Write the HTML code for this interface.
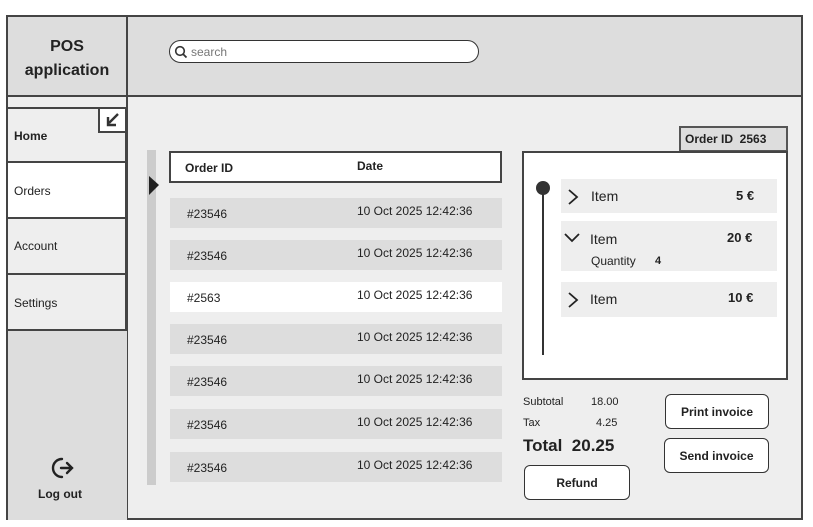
<!DOCTYPE html>
<html><head><meta charset="utf-8"><style>
*{margin:0;padding:0;box-sizing:border-box}
body{width:813px;height:527px;background:#fff;font-family:"Liberation Sans",sans-serif;color:#222;position:relative;overflow:hidden}
.a{position:absolute}
.b{font-weight:bold}
.row{position:absolute;left:170px;width:332px;height:30px;background:#ddd;font-size:12px}
.row span{position:absolute;top:9px}
.row .i{left:17px}
.row .d{left:187px;top:6px}
.nav{position:absolute;left:6px;width:121px;height:56px;border-bottom:2px solid #444;border-left:2px solid #444;border-right:2px solid #444;font-size:12px;padding-left:6px}
.it{position:absolute;left:561px;width:216px;background:#eee;font-size:14px}
.btn{position:absolute;background:#fff;border:1.5px solid #333;border-radius:6px;font-size:12px;font-weight:bold;text-align:center}
</style></head><body>
<div class="a" style="left:6px;top:15px;width:797px;height:505px;background:#eee;border:2px solid #444"></div>
<div class="a" style="left:6px;top:15px;width:797px;height:82px;background:#ddd;border:2px solid #444"></div>
<div class="a" style="left:126px;top:15px;width:2px;height:505px;background:#444"></div>
<div class="a b" style="left:8px;top:35px;width:118px;text-align:center;font-size:16px;line-height:24px">POS<br>application</div>
<div class="a" style="left:169px;top:40px;width:310px;height:23px;background:#fff;border:1.5px solid #333;border-radius:12px"></div>
<svg class="a" style="left:174px;top:45px" width="14" height="14"><circle cx="6" cy="6" r="4.3" fill="none" stroke="#333" stroke-width="1.6"/><path d="M9 9l3.5 3.5" stroke="#333" stroke-width="1.8"/></svg>
<div class="a" style="left:191px;top:45px;font-size:12px;color:#777">search</div>

<div class="a" style="left:6px;top:107px;width:121px;height:413px;background:#ddd;border-left:2px solid #444;border-top:2px solid #444"></div>
<div class="nav" style="top:107px;background:#eee;border-top:2px solid #444;font-weight:bold;padding-top:20px">Home</div>
<div class="nav" style="top:163px;background:#fff;padding-top:21px">Orders</div>
<div class="nav" style="top:219px;background:#eee;padding-top:20px">Account</div>
<div class="nav" style="top:275px;background:#eee;padding-top:21px">Settings</div>
<div class="a" style="left:98px;top:107px;width:29px;height:26px;background:#fff;border:2px solid #444"></div>
<svg class="a" style="left:103px;top:110px" width="20" height="20"><path d="M15 4L6 13M5 7v8h8" fill="none" stroke="#333" stroke-width="2.4"/></svg>
<svg class="a" style="left:50px;top:455px" width="28" height="28"><path d="M12 4A9 9 0 1 0 12 22" fill="none" stroke="#222" stroke-width="2.4" stroke-linecap="round"/><path d="M11 13h11M17 8l5 5-5 5" fill="none" stroke="#222" stroke-width="2.4" stroke-linecap="round"/></svg>
<div class="a b" style="left:38px;top:487px;font-size:12px">Log out</div>

<div class="a" style="left:147px;top:150px;width:9px;height:335px;background:#ccc"></div>
<svg class="a" style="left:148px;top:175px" width="14" height="22"><path d="M1 1L11 10L1 20Z" fill="#222"/></svg>
<div class="a" style="left:169px;top:151px;width:333px;height:32px;background:#fff;border:2px solid #444"></div>
<div class="a b" style="left:185px;top:161px;font-size:12px">Order ID</div>
<div class="a b" style="left:357px;top:159px;font-size:12px">Date</div>
<div class="row" style="top:198px"><span class="i">#23546</span><span class="d">10 Oct 2025 12:42:36</span></div>
<div class="row" style="top:240px"><span class="i">#23546</span><span class="d">10 Oct 2025 12:42:36</span></div>
<div class="row" style="top:282px;background:#fff"><span class="i">#2563</span><span class="d">10 Oct 2025 12:42:36</span></div>
<div class="row" style="top:324px"><span class="i">#23546</span><span class="d">10 Oct 2025 12:42:36</span></div>
<div class="row" style="top:366px"><span class="i">#23546</span><span class="d">10 Oct 2025 12:42:36</span></div>
<div class="row" style="top:409px"><span class="i">#23546</span><span class="d">10 Oct 2025 12:42:36</span></div>
<div class="row" style="top:452px"><span class="i">#23546</span><span class="d">10 Oct 2025 12:42:36</span></div>

<div class="a" style="left:679px;top:126px;width:109px;height:26px;background:#ddd;border:2px solid #555"></div>
<div class="a b" style="left:685px;top:132px;font-size:12px">Order ID&nbsp; 2563</div>
<div class="a" style="left:522px;top:151px;width:266px;height:229px;background:#fff;border:2px solid #444"></div>
<div class="a" style="left:542px;top:182px;width:2px;height:173px;background:#333"></div>
<div class="a" style="left:536px;top:181px;width:14px;height:14px;border-radius:50%;background:#333"></div>
<div class="it" style="top:179px;height:34px"><svg class="a" style="left:6px;top:9px" width="12" height="18"><path d="M2 2l8 7-8 7" fill="none" stroke="#222" stroke-width="1.8"/></svg><span class="a" style="left:30px;top:9px">Item</span><span class="a b" style="left:175px;top:9px;font-size:13px">5 €</span></div>
<div class="it" style="top:221px;height:50px"><svg class="a" style="left:2px;top:11px" width="18" height="12"><path d="M2 2l7 7 7-7" fill="none" stroke="#222" stroke-width="1.8"/></svg><span class="a" style="left:29px;top:10px">Item</span><span class="a b" style="left:166px;top:9px;font-size:13px">20 €</span><span class="a" style="left:30px;top:33px;font-size:12px">Quantity</span><span class="a b" style="left:94px;top:34px;font-size:11px">4</span></div>
<div class="it" style="top:282px;height:35px"><svg class="a" style="left:6px;top:9px" width="12" height="18"><path d="M2 2l8 7-8 7" fill="none" stroke="#222" stroke-width="1.8"/></svg><span class="a" style="left:29px;top:9px">Item</span><span class="a b" style="left:167px;top:8px;font-size:13px">10 €</span></div>

<div class="a" style="left:523px;top:396px;font-size:11px">Subtotal</div>
<div class="a" style="left:591px;top:396px;font-size:11px">18.00</div>
<div class="a" style="left:523px;top:417px;font-size:11px">Tax</div>
<div class="a" style="left:596px;top:417px;font-size:11px">4.25</div>
<div class="a b" style="left:523px;top:436px;font-size:17px">Total&nbsp; 20.25</div>
<div class="btn" style="left:665px;top:394px;width:104px;height:35px;padding-top:10px">Print invoice</div>
<div class="btn" style="left:664px;top:438px;width:105px;height:35px;padding-top:10px">Send invoice</div>
<div class="btn" style="left:524px;top:465px;width:106px;height:35px;padding-top:10px">Refund</div>
</body></html>
